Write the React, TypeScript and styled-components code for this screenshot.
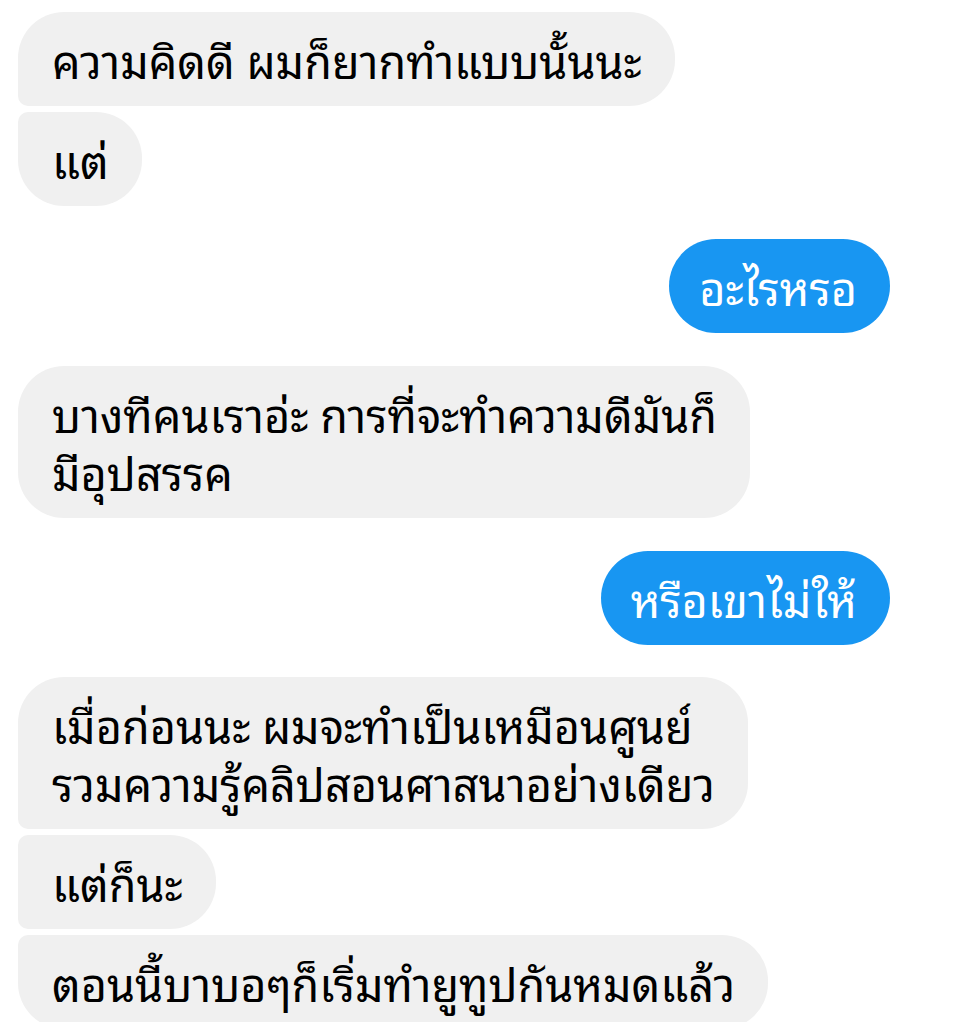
import styled, { createGlobalStyle, css } from "styled-components";

const GlobalStyle = createGlobalStyle`
  html, body {
    margin: 0;
    padding: 0;
    background: #ffffff;
  }
  body {
    font-family: "Noto Sans Thai Looped", "Garuda", "Loma", "Tlwg Typo", "Sarabun", "Noto Sans Thai", sans-serif;
  }
`;

type Side = "left" | "right";
type Corner = "single" | "first" | "middle" | "last";

type Message = {
  side: Side;
  text: string[];
  corner: Corner;
  gap: number;
};

const messages: Message[] = [
  { side: "left", text: ["ความคิดดี ผมก็ยากทำแบบนั้นนะ"], corner: "first", gap: 0 },
  { side: "left", text: ["แต่"], corner: "last", gap: 6 },
  { side: "right", text: ["อะไรหรอ"], corner: "single", gap: 33 },
  {
    side: "left",
    text: ["บางทีคนเราอ่ะ การที่จะทำความดีมันก็", "มีอุปสรรค"],
    corner: "single",
    gap: 33,
  },
  { side: "right", text: ["หรือเขาไม่ให้"], corner: "single", gap: 33 },
  {
    side: "left",
    text: ["เมื่อก่อนนะ ผมจะทำเป็นเหมือนศูนย์", "รวมความรู้คลิปสอนศาสนาอย่างเดียว"],
    corner: "first",
    gap: 32,
  },
  { side: "left", text: ["แต่ก็นะ"], corner: "middle", gap: 6 },
  { side: "left", text: ["ตอนนี้บาบอๆก็เริ่มทำยูทูปกันหมดแล้ว"], corner: "last", gap: 6 },
];

const BIG = 46;
const SMALL = 10;

const leftCorners = (corner: Corner) => {
  switch (corner) {
    case "first":
      return `${BIG}px ${BIG}px ${BIG}px ${SMALL}px`;
    case "middle":
      return `${SMALL}px ${BIG}px ${BIG}px ${SMALL}px`;
    case "last":
      return `${SMALL}px ${BIG}px ${BIG}px ${BIG}px`;
    default:
      return `${BIG}px`;
  }
};

export default function App() {
  return (
    <>
      <GlobalStyle />
      <Thread>
        {messages.map((m, i) => (
          <Row key={i} $side={m.side} $gap={m.gap}>
            <Bubble $side={m.side} $corner={m.corner}>
              {m.text.map((line, j) => (
                <Line key={j}>{line}</Line>
              ))}
            </Bubble>
          </Row>
        ))}
      </Thread>
    </>
  );
}

const Thread = styled.div`
  display: flex;
  flex-direction: column;
  width: 960px;
  height: 1022px;
  box-sizing: border-box;
  padding: 12px 70px 0 18px;
  overflow: hidden;
`;

const Row = styled.div<{ $side: Side; $gap: number }>`
  display: flex;
  justify-content: ${({ $side }) => ($side === "right" ? "flex-end" : "flex-start")};
  margin-top: ${({ $gap }) => $gap}px;
  flex-shrink: 0;
`;

const Bubble = styled.div<{ $side: Side; $corner: Corner }>`
  padding: 18px 33px 18px 34px;
  font-size: 45px;
  line-height: 58px;
  white-space: nowrap;
  ${({ $side, $corner }) =>
    $side === "right"
      ? css`
          background: #1896f2;
          color: #ffffff;
          border-radius: 47px;
          padding-left: 30px;
        `
      : css`
          background: #f0f0f0;
          color: #000000;
          border-radius: ${leftCorners($corner)};
        `}
`;

const Line = styled.div``;
